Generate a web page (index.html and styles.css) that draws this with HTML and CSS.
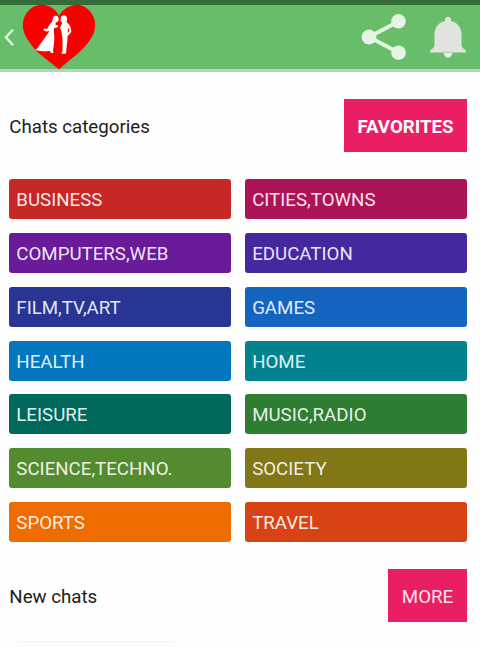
FILE: index.html
```html
<!DOCTYPE html>
<html lang="en">
<head>
  <meta charset="UTF-8">
  <title>Chats categories</title>
  <link rel="stylesheet" href="styles.css">
</head>
<body>
  <div class="status-bar"></div>
  <header class="toolbar">
    <svg class="back" width="20" height="64" viewBox="0 5 20 64">
      <path d="M13 29.5 6 37.3l7 7.8" fill="none" stroke="#e2f3df" stroke-width="2.4"/>
    </svg>
    <svg class="logo" width="74" height="66" viewBox="22 4 74 66">
      <path d="M59 69.5C50 61 38 55 30 43C24 35 21 27 24 18C28 7 39 2 48 6C54 8 57 12 59 16C61 12 65 8 71 6C80 2 90 8 94 18C97 27 94 36 87 44C79 54 68 61 59 69.5Z" fill="#fb0000"/>
      <path d="M53.5 16.5C55 15 58 15.500 58.300 17.500L58.800 20L57.700 21.700L56 22.500L55.300 24.500L58.300 25.700L57.800 27.200L54.300 28L53.800 31C55 38 54 45 53 50.500L53.500 53H51L50 51C45 51.500 40 51.500 35.500 50C38 48 39 46 41 43C44 39 47 35 49.500 31L46 31.500L43.500 30L44 28.500L47 29L50 24L52 22Z" fill="#fff"/>
      <path d="M61 17C62 15 66 15 67 17.500C67.500 19.500 66.500 21 66.700 22.500C69 23.500 71 27 71.300 31C71.500 33 69 34 67.500 36.500C67.500 42 66.500 47 66.200 52L65.500 53.800H61.500L62.500 51V39L61.500 32L60 27.500L62.300 23L60.500 21Z" fill="#fff"/>
      <path d="M68 27.500L69.500 30.500L67.800 33Z" fill="#fb0000"/>
    </svg>
    <div class="actions">
      <svg width="46" height="64" viewBox="361 5 46 64">
        <path d="M398.500 21.500 369 37l29.500 15.500" fill="none" stroke="#e1f5df" stroke-width="4"/>
        <g fill="#e5f4e4">
          <circle cx="398.500" cy="21.300" r="7.300"/>
          <circle cx="369" cy="37" r="7.400"/>
          <circle cx="398.500" cy="52.700" r="7.300"/>
        </g>
      </svg>
      <svg width="38" height="64" viewBox="429 5 38 64">
        <path d="M443.700 53h8.600c-.5 3-2 4.700-4.300 4.700s-3.800-1.700-4.300-4.700Z" fill="#e1f5df"/>
        <path d="M445 21v-1.200c0-4 6-4 6 0V21c6.500 1.500 10.500 6.500 10.500 13v10.500c0 2.500 1.500 4 4.500 6V52.500H430V50.500c3-2 4.500-3.500 4.500-6V34c0-6.500 4-11.500 10.500-13Z" fill="#e1e3e1"/>
      </svg>
    </div>
  </header>

  <main class="content">
    <div class="section-head">
      <h2>Chats categories</h2>
      <button class="btn btn-bold">FAVORITES</button>
    </div>

    <div class="categories">
      <a class="cat business">BUSINESS</a>
      <a class="cat cities">CITIES,TOWNS</a>
      <a class="cat computers">COMPUTERS,WEB</a>
      <a class="cat education">EDUCATION</a>
      <a class="cat film">FILM,TV,ART</a>
      <a class="cat games">GAMES</a>
      <a class="cat health">HEALTH</a>
      <a class="cat home">HOME</a>
      <a class="cat leisure">LEISURE</a>
      <a class="cat music">MUSIC,RADIO</a>
      <a class="cat science">SCIENCE,TECHNO.</a>
      <a class="cat society">SOCIETY</a>
      <a class="cat sports">SPORTS</a>
      <a class="cat travel">TRAVEL</a>
    </div>

    <div class="section-head">
      <h2>New chats</h2>
      <button class="btn btn-more">MORE</button>
    </div>

    <div class="chat-card"></div>
  </main>
</body>
</html>
```

FILE: styles.css
```css
body {
  margin: 0;
  background: #fefefe;
  color: #202020;
  font-family: Roboto, sans-serif;
  font-size: 18.7px;
}

.status-bar {
  height: 5px;
  background: #356c39;
}

.toolbar {
  display: flex;
  align-items: center;
  height: 64px;
  background: #67bd6a;
  border-bottom: 3px solid #b7d5b7;
}

.back {
  margin-right: 2px;
}

.logo {
  margin-top: -1px;
  overflow: visible;
}

.actions {
  display: flex;
  gap: 22px;
  margin-left: auto;
  margin-right: 13px;
}

.content {
  padding: 27px 13px 0 9.3px;
}

.section-head {
  display: flex;
  justify-content: space-between;
  align-items: center;
  height: 53px;
}

.section-head h2 {
  margin: 0;
  padding-top: 3px;
  font-size: 18.7px;
  font-weight: 400;
}

.btn {
  width: 123px;
  height: 53px;
  padding: 2px 0 0;
  border: none;
  background: #e91e63;
  color: #fff;
  font-family: inherit;
  font-size: 18.7px;
}

.btn-bold {
  font-weight: 700;
}

.btn-more {
  width: 79px;
  padding-top: 3px;
  color: #fde4ed;
}

.categories {
  display: grid;
  grid-template-columns: 1fr 1fr;
  gap: 13.85px 14px;
  margin: 27px 0 26.7px;
}

.cat {
  height: 40px;
  padding-left: 7px;
  border-radius: 3px;
  color: rgba(255, 255, 255, 0.9);
  line-height: 42px;
}

.business { background: #c62828; }
.cities { background: #ad1457; }
.computers { background: #6a1b9a; }
.education { background: #4527a0; }
.film { background: #283593; }
.games { background: #1565c0; }
.health { background: #0277bd; }
.home { background: #00838f; }
.leisure { background: #00695c; }
.music { background: #2e7d32; }
.science { background: #558b2f; }
.society { background: #827717; }
.sports { background: #ef6c00; }
.travel { background: #d84315; }

.chat-card {
  width: 162px;
  height: 4px;
  margin: 19px 0 0 5px;
  border: 1px solid #f5f5f5;
  border-bottom: none;
  border-radius: 5px 5px 0 0;
}
```
